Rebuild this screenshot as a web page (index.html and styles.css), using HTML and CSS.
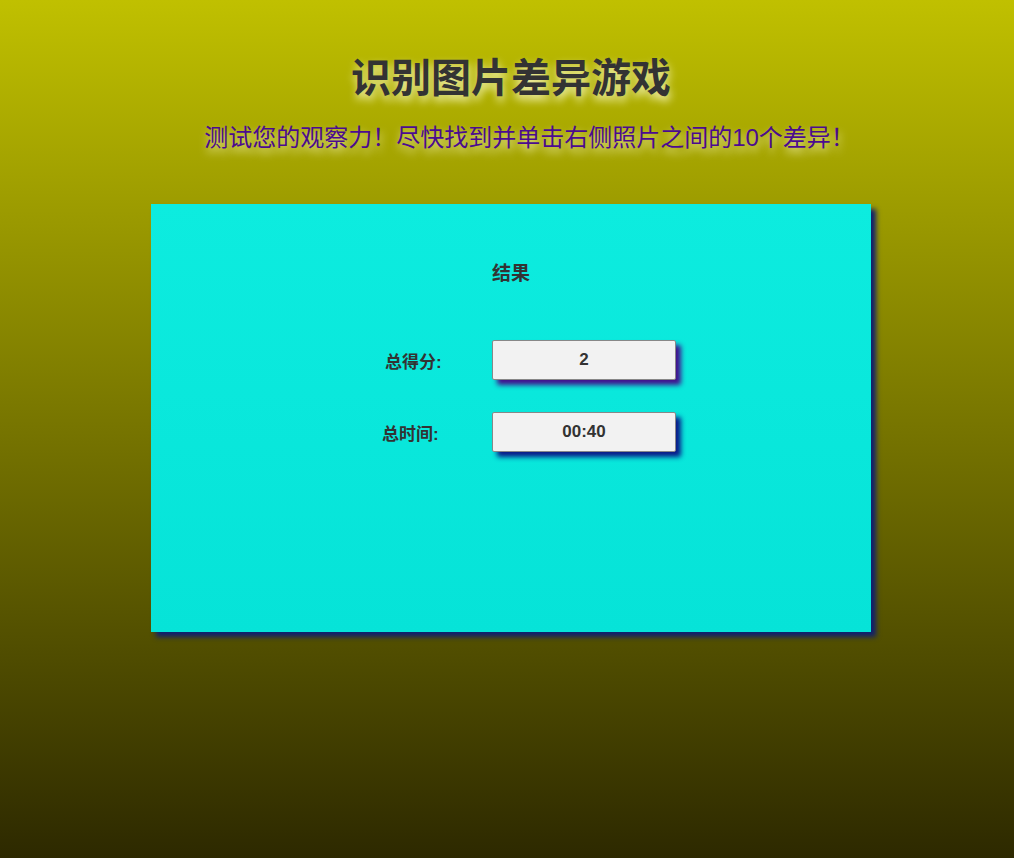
FILE: index.html
```html
<!DOCTYPE html>
<html lang="zh-CN">
<head>
<meta charset="utf-8">
<title>识别图片差异游戏</title>
<link rel="stylesheet" href="styles.css">
</head>
<body>
<div class="page">
  <header class="header">
    <h1 class="title">识别图片差异游戏</h1>
    <p class="subtitle">测试您的观察力！尽快找到并单击右侧照片之间的10个差异！</p>
  </header>
  <main class="card">
    <h2 class="card-title">结果</h2>
    <div class="results">
      <div class="label label-score">总得分:</div>
      <div class="value value-score">2</div>
      <div class="label label-time">总时间:</div>
      <div class="value value-time">00:40</div>
    </div>
  </main>
</div>
</body>
</html>
```
FILE: styles.css
```css
html, body {
  margin: 0;
  padding: 0;
}
body {
  min-height: 858px;
  background: linear-gradient(to bottom, #c0c000 0%, #2d2900 100%);
  font-family: "Liberation Sans", "Noto Sans CJK SC", sans-serif;
  color: #333;
}
.page {
  min-height: 858px;
  padding-left: 8px;
  box-sizing: border-box;
  display: flex;
  flex-direction: column;
  align-items: center;
}
.header {
  padding-top: 51px;
  text-align: center;
}
.title {
  margin: 0;
  font-size: 40px;
  line-height: 48px;
  font-weight: bold;
  color: #333;
  font-family: "Noto Sans CJK SC", "Liberation Sans", sans-serif;
  text-shadow: 1px 5px 8px rgba(255, 255, 210, 0.85);
}
.subtitle {
  margin: 24px 0 0;
  padding-left: 37px;
  font-size: 24px;
  line-height: 30px;
  color: #4b0b8f;
  font-family: "Liberation Sans", "Noto Sans CJK SC", sans-serif;
  text-shadow: 1px 5px 8px rgba(255, 255, 210, 0.8);
}
.card {
  margin-top: 51px;
  width: 720px;
  height: 428px;
  box-sizing: border-box;
  padding-top: 59px;
  background: linear-gradient(to bottom, #0decdf, #06e3d8);
  box-shadow: 5px 5px 5px #0f1f6e;
  display: flex;
  flex-direction: column;
  align-items: center;
}
.card-title {
  margin: 0;
  font-size: 19px;
  line-height: 22px;
  font-weight: bold;
  color: #333;
}
.results {
  margin-top: 55px;
  margin-left: 36px;
  display: grid;
  grid-template-columns: 110px 184px;
  row-gap: 32px;
  align-items: center;
}
.label {
  font-size: 17px;
  font-weight: bold;
  color: #333;
  justify-self: start;
}
.label-score {
  padding-left: 3px;
}
.value {
  height: 40px;
  box-sizing: border-box;
  border: 1px solid #888;
  border-radius: 2px;
  background: #f2f2f2;
  display: flex;
  align-items: center;
  justify-content: center;
  font-size: 17px;
  font-weight: bold;
  color: #333;
}
.value-score {
  box-shadow: 5px 5px 5px #43108e;
}
.value-time {
  box-shadow: 5px 5px 5px #0b1a8a;
}
```
